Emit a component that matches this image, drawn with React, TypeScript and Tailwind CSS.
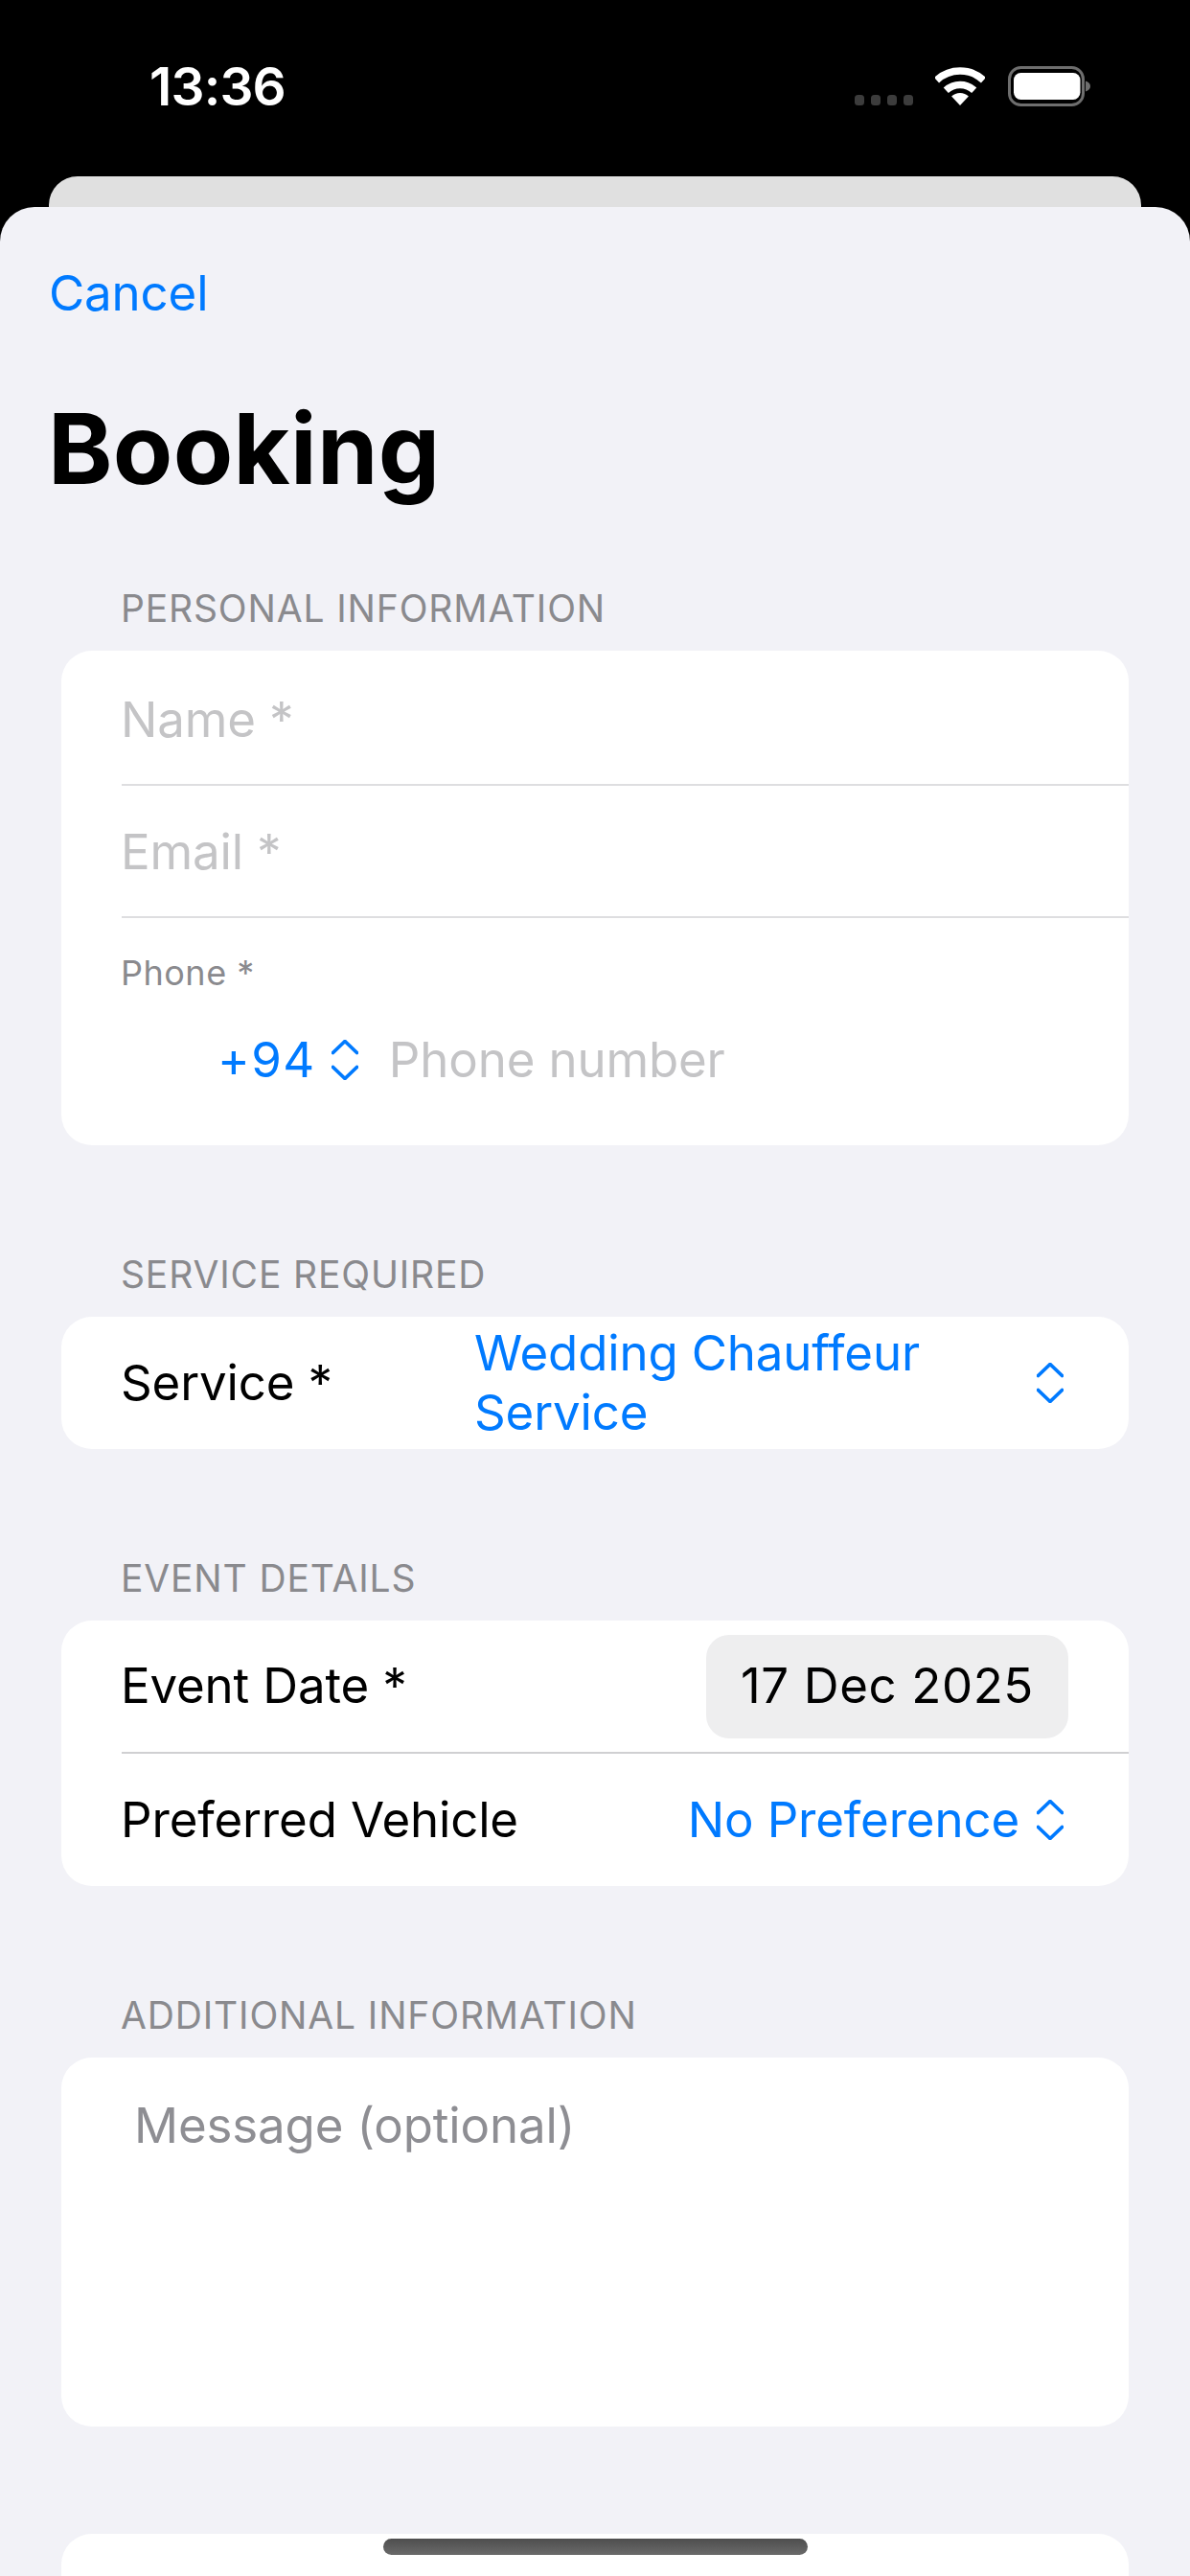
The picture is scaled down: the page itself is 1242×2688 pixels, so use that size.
const UpDown = ({ className = "" }: { className?: string }) => (
  <svg viewBox="0 0 28 42" className={`h-[42px] w-[28px] shrink-0 text-[#007aff] ${className}`} fill="none" stroke="currentColor" strokeWidth="3.8" strokeLinecap="round" strokeLinejoin="round">
    <path d="M1.5 13.5 14 1.5 26.5 13.5" />
    <path d="M1.5 28.5 14 40.5 26.5 28.5" />
  </svg>
);

const Wifi = () => (
  <svg viewBox="0 0 52 40" className="h-[40px] w-[52px]" fill="none" stroke="white" strokeWidth="7.5">
    <path d="M1.5 13.7A36 36 0 0 1 50.5 13.7" />
    <path d="M11.3 24.3A21.5 21.5 0 0 1 40.7 24.3" />
    <path d="M26 40 17.1 30.5A13 13 0 0 1 34.9 30.5Z" fill="white" stroke="none" />
  </svg>
);

const Battery = () => (
  <svg viewBox="0 0 87 42" className="h-[42px] w-[87px]" fill="none">
    <rect x="1.5" y="1.5" width="77" height="39" rx="12" stroke="#6e6e6e" strokeWidth="3" />
    <rect x="6" y="7" width="69.5" height="28" rx="7.5" fill="white" />
    <path d="M81 15.5c3.4 1 5 3 5 5.5s-1.6 4.5-5 5.5Z" fill="#6e6e6e" />
  </svg>
);

const Section = ({ title, className = "", children }: { title: string; className?: string; children: React.ReactNode }) => (
  <section className={className}>
    <h2 className="mb-[24px] h-[40px] pl-[126px] text-[39px] leading-[40px] font-normal tracking-[0.85px] text-[#8a8a8e] uppercase">{title}</h2>
    <div className="mx-[64px] overflow-hidden rounded-[32px] bg-white">{children}</div>
  </section>
);

const Sep = ({ color = "bg-[#dedee0]" }: { color?: string }) => <div className={`ml-[63px] h-[2px] ${color}`} />;

export default function App() {
  return (
    <div className="relative flex h-[2688px] w-[1242px] flex-col overflow-hidden bg-black font-['Inter','Liberation_Sans',sans-serif] text-[51px] tracking-[-0.15px] text-black">
      <header className="flex h-[184px] shrink-0 items-start justify-between pt-[66px] pr-[103px] pl-[156px]">
        <span className="text-[55px] leading-[48px] font-semibold tracking-[-0.8px] text-white">13:36</span>
        <div className="flex items-start">
          <div className="mt-[33px] mr-[23px] flex gap-[6.5px]">
            <span className="h-[10.5px] w-[10.5px] rounded-[3.5px] bg-[#3c3c3c]" />
            <span className="h-[10.5px] w-[10.5px] rounded-[3.5px] bg-[#3c3c3c]" />
            <span className="h-[10.5px] w-[10.5px] rounded-[3.5px] bg-[#3c3c3c]" />
            <span className="h-[10.5px] w-[10.5px] rounded-[3.5px] bg-[#3c3c3c]" />
          </div>
          <div className="mt-[4px] mr-[24px]"><Wifi /></div>
          <div className="mt-[3px]"><Battery /></div>
        </div>
      </header>

      <div className="mx-[51px] h-[32px] shrink-0 rounded-t-[30px] bg-[#e0e0e0]" />

      <main className="min-h-0 flex-1 overflow-hidden rounded-t-[36px] bg-[#f2f2f7]">
        <div className="mt-[60px] h-[60px] pl-[51px] leading-[60px] text-[#007aff]">Cancel</div>
        <h1 className="mt-[81px] h-[102px] pl-[50px] text-[102px] leading-[102px] font-bold tracking-[0.3px]">Booking</h1>

        <Section title="Personal Information" className="mt-[96px]">
          <div className="flex h-[139px] items-center pt-[6px] pl-[62px] text-[#c4c4c6]">Name *</div>
          <Sep />
          <div className="flex h-[136px] items-center pt-[2px] pl-[62px] text-[#c4c4c6]">Email *</div>
          <Sep />
          <div className="h-[237px] pt-[35px]">
            <div className="h-[44px] pl-[62px] text-[36px] leading-[44px] tracking-[0.5px] text-[#8a8a8e]">Phone *</div>
            <div className="mt-[37px] flex h-[64px] items-center pl-[163px]">
              <span className="tracking-[1.5px] text-[#007aff]">+94</span>
              <UpDown className="ml-[16px]" />
              <span className="ml-[32px] text-[#c4c4c6]">Phone number</span>
            </div>
          </div>
        </Section>

        <Section title="Service Required" className="mt-[115px]">
          <div className="flex h-[138px] items-center pl-[62px]">
            <span className="w-[369px] shrink-0">Service *</span>
            <span className="w-[520px] shrink-0 leading-[62px] text-[#007aff]">Wedding Chauffeur Service</span>
            <UpDown className="ml-[67px]" />
          </div>
        </Section>

        <Section title="Event Details" className="mt-[115px]">
          <div className="flex h-[137px] items-center justify-between pr-[63px] pl-[62px]">
            <span>Event Date *</span>
            <span className="flex h-[108px] w-[378px] items-center justify-center rounded-[24px] bg-[#eeeeef] tracking-[0.6px]">17 Dec 2025</span>
          </div>
          <Sep color="bg-[#d0d0d2]" />
          <div className="flex h-[138px] items-center justify-between pr-[68px] pl-[62px]">
            <span>Preferred Vehicle</span>
            <span className="flex items-center gap-[18px] text-[#007aff]">No Preference<UpDown /></span>
          </div>
        </Section>

        <Section title="Additional Information" className="mt-[115px]">
          <div className="h-[385px] pt-[39px] pl-[76px] leading-[64px] text-[#8e8e93]">Message (optional)</div>
        </Section>

        <div className="mx-[64px] mt-[112px] h-[200px] rounded-[32px] bg-white" />
      </main>

      <div className="absolute top-[2649px] left-[400px] h-[17px] w-[443px] rounded-full bg-gradient-to-b from-[#4e4e4e] to-[#6a6a6a]" />
    </div>
  );
}
